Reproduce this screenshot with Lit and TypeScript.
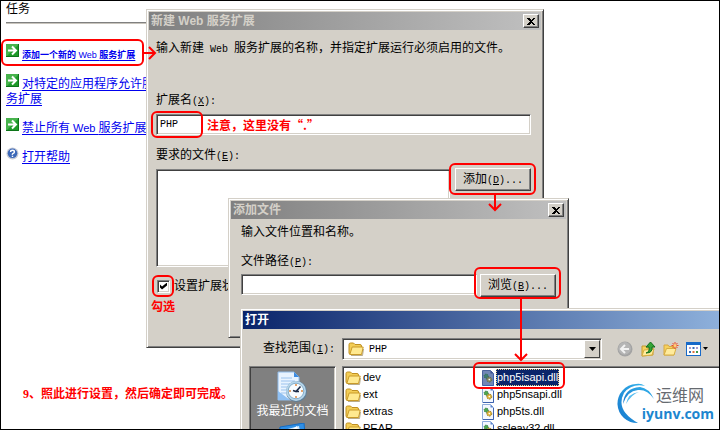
import { LitElement, html, css, svg, nothing } from "lit";
import { customElement, property } from "lit/decorators.js";

const base = css`
  * { box-sizing: border-box; }
  .mono { font-family: "Liberation Mono", monospace; font-size: 10px; white-space: pre; }
  u { text-decoration: underline; }
  svg { display: block; }
`;

const folder = () => html`<svg class="icon" width="16" height="14" viewBox="0 0 16 14" aria-hidden="true">
  <path d="M1 2.5Q1 1 2.5 1H5.5L7 2.5H12Q13.5 2.5 13.5 4V12H2Q1 12 1 11Z" fill="#f3cd55" stroke="#c09022"/>
  <path d="M4.2 5H15.2L13.6 12.5H1.8Z" fill="#ffe98f" stroke="#c99a2a"/>
  <path d="M3 13.5H14.5L15.5 7" fill="none" stroke="#8a7440" stroke-opacity=".6"/>
</svg>`;

const dll = (selected = false) => html`<svg class="icon" width="14" height="16" viewBox="0 0 14 16" aria-hidden="true">
  <path d="M1.5.5H9.5L12.5 3.5V15.5H1.5Z" fill=${selected ? "#7186b5" : "#f4f8ff"} stroke=${selected ? "#4b629c" : "#8daadb"}/>
  <path d="M9.5.5V3.5H12.5Z" fill=${selected ? "#3d5595" : "#5b84cd"}/>
  <path d="M12.5 4V15.5H2" fill="none" stroke="#3d62ae"/>
  <circle cx="5.2" cy="6.2" r="2.1" fill=${selected ? "#3f7a72" : "#4fa650"} stroke="#2c6e48" stroke-dasharray="1 1"/>
  <circle cx="8.3" cy="9.6" r="2.5" fill=${selected ? "#8a8a62" : "#dfb43a"} stroke=${selected ? "#5b6548" : "#8e7320"} stroke-dasharray="1.5 1"/>
  <circle cx="8.3" cy="9.6" r=".8" fill="#fff"/>
</svg>`;

const goIcon = () => html`<svg class="glyph" width="13" height="13" viewBox="0 0 13 13" aria-hidden="true">
  <rect width="13" height="13" fill="#1f9a2a"/>
  <path d="M0 0H13L0 13Z" fill="#62c464" opacity=".6"/>
  <path d="M2 6.5H9.5M6 2.5L10 6.5L6 10.5" fill="none" stroke="#fff" stroke-width="2"/>
  <path d="M0 12.5H12.5V0" fill="none" stroke="#0d7418"/>
</svg>`;

const helpIcon = () => html`<svg class="glyph" width="13" height="13" viewBox="0 0 13 13" aria-hidden="true">
  <circle cx="6.5" cy="6.5" r="6" fill="#c7cbd6"/>
  <circle cx="6.5" cy="6.3" r="4.8" fill="#3c68b8"/>
  <path d="M4.6 5Q4.6 3.3 6.5 3.3T8.4 4.9Q8.4 5.8 7.2 6.4T6.5 7.8M6.5 8.8V10" fill="none" stroke="#fff" stroke-width="1.4"/>
</svg>`;

@customElement("classic-window")
class ClassicWindow extends LitElement {
  @property() heading = "";
  @property({ type: Boolean, reflect: true }) active = false;
  @property({ type: Boolean }) closable = false;

  static styles = [base, css`
    :host {
      display: flex; flex-direction: column; padding: 1px;
      background: #d4d0c8; border: 1px solid;
      border-color: #d4d0c8 #404040 #404040 #d4d0c8;
      box-shadow: inset 1px 1px #fff, inset -1px -1px #808080;
    }
    .bar {
      display: flex; align-items: center; justify-content: space-between;
      height: 18px; margin: 1px; padding: 0 2px; flex: none;
      background: linear-gradient(90deg, #808080, #c0c0c0);
      color: #d4d0c8; font-size: 12px; font-weight: bold; line-height: 18px;
    }
    :host([active]) .bar { background: linear-gradient(90deg, #0a246a, #a6caf0); color: #fff; }
    .close {
      width: 16px; height: 14px; padding: 0; display: grid; place-items: center;
      background: #d4d0c8; border: 1px solid; border-color: #fff #404040 #404040 #fff;
      box-shadow: inset -1px -1px #808080;
    }
  `];

  render() {
    return html`
      <div class="bar">
        <span>${this.heading}</span>
        ${this.closable ? html`<button class="close" aria-label="关闭">
          <svg width="8" height="7" viewBox="0 0 8 7" shape-rendering="crispEdges"><path d="M0 0H2L4 2L6 0H8L5 3.5L8 7H6L4 5L2 7H0L3 3.5Z" fill="#000"/></svg>
        </button>` : nothing}
      </div>
      <slot></slot>`;
  }
}

@customElement("task-panel")
class TaskPanel extends LitElement {
  static styles = [base, css`
    :host { display: block; padding: 2px 0 0 6px; font-size: 12px; line-height: 15px; }
    h2 { margin: 0; padding-bottom: 5px; font: inherit; border-bottom: 1px solid #808080; box-shadow: 0 1px #c8c4bc; }
    ul { list-style: none; margin: 0; padding: 24px 0 0; display: flex; flex-direction: column; gap: 14px; }
    li { white-space: nowrap; }
    a { color: #0000ee; text-underline-offset: 2px; }
    .glyph { display: inline-block; vertical-align: 1px; margin: -3px 3px 0 0; }
    .small { font-size: 9px; font-weight: bold; }
    .latin { font-size: 11px; font-weight: normal; }
    .small .latin { font-size: 9px; }
  `];

  render() {
    return html`
      <h2>任务</h2>
      <ul>
        <li>${goIcon()}<a class="small" href="#add">添加一个新的<span class="latin"> Web </span>服务扩展</a></li>
        <li>${goIcon()}<a href="#allow">对特定的应用程序允许服<br>务扩展</a></li>
        <li>${goIcon()}<a href="#deny">禁止所有<span class="latin"> Web </span>服务扩展</a></li>
        <li>${helpIcon()}<a href="#help">打开帮助</a></li>
      </ul>`;
  }
}

const FOLDERS = ["dev", "ext", "extras", "PEAR"];
const LIBRARIES = ["php5isapi.dll", "php5nsapi.dll", "php5ts.dll", "ssleay32.dll"];

@customElement("app-root")
class AppRoot extends LitElement {
  static styles = [base, css`
    :host {
      display: block; position: relative; height: 100vh; overflow: hidden; background: #fff; color: #000;
      font-family: "Liberation Sans", "Noto Sans CJK SC", sans-serif; font-size: 12px; line-height: 16px;
    }
    .frame { position: absolute; inset: 0; border: 1px solid #000; pointer-events: none; }
    task-panel { width: 146px; overflow: hidden; }
    classic-window { position: absolute; }
    .extension { left: 146px; top: 9px; width: 398px; height: 339px; }
    .addfile { left: 228px; top: 198px; width: 341px; height: 140px; }
    .open { left: 240px; top: 308px; right: -90px; height: 240px; }

    .form { display: flex; flex-direction: column; padding: 0 11px 0 8px; }
    p { margin: 0; white-space: nowrap; }
    .extension p { padding: 9px 0 34px; }
    .addfile p { padding: 4px 0 13px; }
    .addfile .form { padding: 0 11px; }
    input[type="text"], .list, select, .places {
      border: 1px solid; border-color: #808080 #fff #fff #808080;
      box-shadow: inset 1px 1px #404040, inset -1px -1px #d4d0c8;
      background: #fff; border-radius: 0;
    }
    input[type="text"] {
      height: 21px; padding: 0 3px 1px; margin: 0; outline: none; min-width: 0;
      font-family: "Liberation Mono", monospace; font-size: 10px;
    }
    input.name[type="text"] { margin: 4px 0 12px; }
    .row { display: flex; align-items: flex-start; gap: 5px; }
    .list { flex: 1; height: 98px; }
    .extension .row { margin-top: 4px; }
    .addfile .row { margin-top: 3px; gap: 3px; }
    .addfile .row input { flex: 1; }
    .push {
      width: 76px; height: 23px; padding: 0; background: #d4d0c8; color: #000;
      border: 1px solid; border-color: #fff #404040 #404040 #fff; box-shadow: inset -1px -1px #808080;
      font: inherit; white-space: nowrap;
    }
    .extension .push { margin-top: -1px; }
    .check { display: flex; align-items: center; gap: 4px; margin-top: 11px; padding-left: 1px; white-space: nowrap; }
    .check input {
      appearance: none; width: 13px; height: 13px; margin: 0; background: #fff; display: grid; place-items: center;
      border: 1px solid; border-color: #808080 #fff #fff #808080; box-shadow: inset 1px 1px #404040, inset -1px -1px #d4d0c8;
    }
    .check input:checked::after {
      content: ""; width: 7px; height: 7px; background: #000;
      clip-path: polygon(0 29%, 0 71%, 29% 100%, 100% 43%, 100% 0, 29% 57%);
    }

    .lookup { display: flex; align-items: center; padding: 8px 0 0 21px; }
    .lookup label { width: 79px; white-space: nowrap; }
    .combo { position: relative; width: 260px; }
    .combo select {
      appearance: none; width: 100%; height: 22px; display: block; padding: 0 20px 0 26px; margin: 0;
      color: #000; font-family: "Liberation Mono", monospace; font-size: 10px;
    }
    .combo .icon { position: absolute; left: 6px; top: 4px; }
    .arrow {
      position: absolute; right: 2px; top: 2px; width: 16px; height: 18px; display: grid; place-items: center;
      background: #d4d0c8; border: 1px solid; border-color: #fff #404040 #404040 #fff; pointer-events: none;
    }
    .tools { display: flex; align-items: center; gap: 7px; margin-left: 15px; }
    .tools button { border: 0; background: none; padding: 0; margin: 0; display: block; }
    .browse { display: flex; gap: 6px; padding: 6px 0 0 7px; }
    .places {
      width: 87px; height: 160px; background: #808080; padding-top: 4px;
      display: flex; flex-direction: column; align-items: center; gap: 4px;
    }
    .places button {
      border: 0; background: none; padding: 0; color: #fff; font: inherit; white-space: nowrap;
      display: flex; flex-direction: column; align-items: center;
    }
    .files { flex: 1; height: 160px; display: flex; padding: 2px; }
    ul { list-style: none; margin: 0; padding: 0; width: 136px; font-size: 11px; line-height: 17px; }
    li { display: flex; align-items: center; gap: 1px; height: 17px; white-space: nowrap; }
    li span { padding: 0 1px; }
    .picked span { background: #0a246a; color: #fff; outline: 1px dotted #e8d28a; outline-offset: -1px; }

    .marks { position: absolute; left: 0; top: 0; pointer-events: none; }
    .note { position: absolute; color: #f00; font-weight: bold; white-space: nowrap; }
    .warn { left: 207px; top: 117px; font-family: "Noto Sans CJK SC", sans-serif; }
    .tick { left: 151px; top: 299px; }
    .step { left: 23px; top: 386px; font-family: "Liberation Serif", "Noto Sans CJK SC", serif; }
    .logo { position: absolute; right: 4px; bottom: 4px; width: 100px; height: 44px; }
    .logo svg { position: absolute; left: 0; top: 0; }
    .cn { position: absolute; right: 12px; top: 4px; font-size: 16px; line-height: 20px; color: #666a70; }
    .com { position: absolute; right: 2px; top: 23px; font: bold 14px/18px "Open Sans", sans-serif; color: #1c86cf; }
  `];

  private marks() {
    const boxes = [
      [2, 40, 141, 25], [152, 112, 50, 25], [450, 164, 85, 30],
      [475, 268, 85, 30], [474, 363, 90, 25], [153, 276, 20, 20],
    ];
    return html`<svg class="marks" width="720" height="430" viewBox="0 0 720 430" fill="none" stroke="#f00" stroke-width="2" aria-hidden="true">
      ${boxes.map(([x, y, w, h]) => svg`<rect x=${x} y=${y} width=${w} height=${h} rx="5"/>`)}
      <path d="M143 53H155M149 47L155 53L149 59"/>
      <path d="M495 195V210M489 204L495 210L501 204"/>
      <path d="M521 299V360M515 354L521 360L527 354"/>
    </svg>`;
  }

  render() {
    return html`
      <task-panel></task-panel>

      <classic-window class="extension" heading="新建 Web 服务扩展" closable>
        <div class="form">
          <p>输入新建<span class="mono"> Web </span>服务扩展的名称，并指定扩展运行必须启用的文件。</p>
          <label for="name">扩展名<span class="mono">(<u>X</u>):</span></label>
          <input class="name" id="name" type="text" value="PHP">
          <span>要求的文件<span class="mono">(<u>E</u>):</span></span>
          <div class="row">
            <div class="list" role="listbox" aria-label="要求的文件"></div>
            <button class="push">添加<span class="mono">(<u>D</u>)...</span></button>
          </div>
          <label class="check"><input type="checkbox" checked>设置扩展状</label>
        </div>
      </classic-window>

      <classic-window class="addfile" heading="添加文件" closable>
        <div class="form">
          <p>输入文件位置和名称。</p>
          <label for="path">文件路径<span class="mono">(<u>P</u>):</span></label>
          <div class="row">
            <input id="path" type="text">
            <button class="push">浏览<span class="mono">(<u>B</u>)...</span></button>
          </div>
        </div>
      </classic-window>

      <classic-window class="open" heading="打开" active>
        <div class="lookup">
          <label for="where">查找范围<span class="mono">(<u>I</u>):</span></label>
          <div class="combo">
            <select id="where"><option>PHP</option></select>
            ${folder()}
            <span class="arrow"><svg width="7" height="4" viewBox="0 0 7 4"><path d="M0 0H7L3.5 4Z"/></svg></span>
          </div>
          <div class="tools">
            <button aria-label="后退"><svg width="16" height="16" viewBox="0 0 16 16">
              <circle cx="8" cy="8" r="7.5" fill="#a3a3a3"/><circle cx="7.6" cy="7.4" r="6.3" fill="#b5b5b5"/>
              <path d="M12 8H4.5M8 4L4 8L8 12" fill="none" stroke="#f2f2f2" stroke-width="2"/></svg></button>
            <button aria-label="向上"><svg width="16" height="16" viewBox="0 0 16 16">
              <path d="M2 5H6L7 7H13V14L2 15Z" fill="#f6d15c" stroke="#c39a30"/><path d="M4 9L14 8L12 14L2 15Z" fill="#ffeb9c" stroke="#d6ae44"/>
              <path d="M6 12Q10 11 9 6H6L10.5 1L15 6H12Q13 12 6 12Z" fill="#35a537" stroke="#126e1c"/></svg></button>
            <button aria-label="新建文件夹"><svg width="16" height="16" viewBox="0 0 16 16">
              <path d="M1 4H5L6 5.5H11V14H1Z" fill="#f6d15c" stroke="#d6a845"/><path d="M3.5 7.5H13L11 14H1Z" fill="#ffeb9c" stroke="#d6ae44"/>
              <path d="M12 1V8M8.5 4.5H15.5M9.5 2L14.5 7M14.5 2L9.5 7" stroke="#ee4a26"/><circle cx="12" cy="4.5" r="1.5" fill="#ffd37a"/></svg></button>
            <button aria-label="查看"><svg width="24" height="16" viewBox="0 0 24 16">
              <rect x=".5" y="1.5" width="14" height="13" fill="#fff" stroke="#1769c8"/><path d="M0 1H15V4H0Z" fill="#1769c8"/>
              <path d="M3 6H5V8H3ZM10 6H12V8H10Z" fill="#a9c"/><path d="M6.5 6H8.5V8H6.5ZM3 10H5V12H3Z" fill="#3a6fb5"/>
              <path d="M6.5 10H8.5V12H6.5Z" fill="#e0703a"/><path d="M10 10H12V12H10Z" fill="#3d9a4c"/>
              <path d="M17 6H22L19.5 9Z"/></svg></button>
          </div>
        </div>
        <div class="browse">
          <div class="places">
            <button>
              <svg width="32" height="32" viewBox="0 0 32 32" aria-hidden="true">
                <path d="M2 1H18L23 6V29H2Z" fill="#e8f3ff" stroke="#8fbbe9"/>
                <path d="M18 1V6H23Z" fill="#3d8be0"/>
                <path d="M5 7H16M5 10H19M5 13H17M5 16H13M5 19H11M5 22H10" stroke="#9cc3ee"/>
                <path d="M2 20V29H14Z" fill="#8fc0f3"/>
                <circle cx="20.5" cy="20.5" r="10.5" fill="#5f7f99"/><circle cx="20" cy="20" r="10" fill="#b5d5ea"/>
                <circle cx="20" cy="20" r="7.8" fill="#f8fcff" stroke="#86aeca"/>
                <path d="M20 13V15M20 25V27M13 20H15M25 20H27" stroke="#e08840" stroke-width="1.5"/>
                <path d="M24.5 15.5L20 20.5L17 19.5M20 20.5H23" fill="none" stroke="#1c2c48" stroke-width="1.6"/>
              </svg>
              <span>我最近的文档</span>
            </button>
            <button aria-label="桌面">
              <svg width="32" height="32" viewBox="0 0 32 32" aria-hidden="true">
                <path d="M3 4L27 0L29 22H1Z" fill="#2f8fe6" stroke="#146bc2"/>
                <path d="M7 7L22 3L25 18H5Z" fill="#cfe9ff"/>
                <path d="M10 10L20 3L22 12Z" fill="#fff"/>
              </svg>
            </button>
          </div>
          <div class="list files">
            <ul>${FOLDERS.map((n) => html`<li>${folder()}<span>${n}</span></li>`)}</ul>
            <ul>${LIBRARIES.map((n, i) => html`<li class=${i ? "" : "picked"}>${dll(!i)}<span>${n}</span></li>`)}</ul>
          </div>
        </div>
      </classic-window>

      <span class="note warn">注意，这里没有“.”</span>
      <span class="note tick">勾选</span>
      <span class="note step">9、照此进行设置，然后确定即可完成。</span>
      <div class="logo">
        <svg width="42" height="44" viewBox="0 0 42 44" aria-hidden="true">
          <defs><linearGradient id="sky" x1="0" y1="1" x2="1" y2="0"><stop offset="0" stop-color="#1577cc"/><stop offset="1" stop-color="#35b4ec"/></linearGradient></defs>
          <path d="M22 41A19.5 19.5 0 0 1 20 2Q25 1 29 4Q16 1 8 11Q-1 28 22 41Z" fill="url(#sky)"/>
          <path d="M7 22Q8 6 24 5Q33 6 38 17Q31 7 22 8Q11 9 7 22Z" fill="url(#sky)"/>
          <path d="M10 22Q12 11 23 10Q16 12 10 22Z" fill="#58bdf0"/>
        </svg>
        <span class="cn">运维网</span>
        <span class="com">iyunv.com</span>
      </div>
      ${this.marks()}
      <div class="frame"></div>`;
  }
}
